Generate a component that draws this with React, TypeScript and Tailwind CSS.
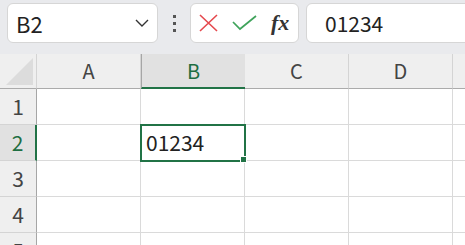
import React from "react";

const cols = ["A", "B", "C", "D", ""];
const rows = [1, 2, 3, 4, 5];

// corner triangle in the top-left header cell
const Corner = () => (
  <div className="flex h-full w-full items-end justify-end border-r border-b border-r-[#d4d4d4] border-b-[#ababab] bg-[#efefef] pr-[3px] pb-[3px]">
    <svg width="27" height="27" viewBox="0 0 27 27">
      <polygon points="27,0 27,27 0,27" fill="#dcdcdc" />
    </svg>
  </div>
);

export default function App() {
  return (
    <div
      className="h-[245px] w-[465px] overflow-hidden bg-[#e9eaed] text-[#333]"
      style={{ fontFamily: '"Noto Sans CJK JP", "Noto Sans", sans-serif' }}
    >
      {/* formula bar */}
      <div className="flex h-[54px] items-start pt-[3px] pl-[7px]">
        <div className="flex h-[40px] w-[151px] shrink-0 items-center justify-between rounded-[6px] border border-[#d6d6d6] bg-white pr-[8px] pl-[8px]">
          <span className="text-[22px] leading-none text-[#222]">B2</span>
          <svg width="14" height="8" viewBox="0 0 14 8" fill="none" stroke="#333" strokeWidth="1.4">
            <path d="M1 1l6 6 6-6" />
          </svg>
        </div>
        <div className="flex h-[40px] w-[32px] shrink-0 flex-col items-center justify-center gap-[4px]">
          <span className="h-[3px] w-[3px] bg-[#555]" />
          <span className="h-[3px] w-[3px] bg-[#555]" />
          <span className="h-[3px] w-[3px] bg-[#555]" />
        </div>
        <div className="flex h-[40px] w-[109px] shrink-0 items-center gap-[14px] rounded-[6px] border border-[#d6d6d6] bg-white pl-[8px]">
          <svg width="19" height="18" viewBox="0 0 19 18" fill="none" stroke="#e5484d" strokeWidth="1.6">
            <path d="M1 1l17 16M18 1L1 17" />
          </svg>
          <svg width="25" height="16" viewBox="0 0 25 16" fill="none" stroke="#3fa35b" strokeWidth="1.7">
            <path d="M1 7l7 7L24 1" />
          </svg>
          <span
            className="text-[22px] font-semibold italic leading-none text-[#333]"
            style={{ fontFamily: '"Liberation Serif", "DejaVu Serif", serif' }}
          >
            fx
          </span>
        </div>
        <div className="ml-[7px] flex h-[40px] w-[200px] shrink-0 items-center rounded-[6px] border border-[#d6d6d6] bg-white pl-[18px]">
          <span className="text-[21px] leading-none text-[#222]">01234</span>
        </div>
      </div>

      {/* sheet grid */}
      <div className="grid grid-cols-[37px_104px_104px_104px_104px_104px] grid-rows-[35px_36px_36px_36px_36px_36px] bg-white">
        <Corner />
        {cols.map((c) =>
          c === "B" ? (
            <div
              key={c}
              className="flex items-center justify-center border-b-2 border-l border-b-[#217346] border-l-[#a6a6a6] bg-[#e1e1e1] text-[20px] text-[#1e6e42]"
            >
              B
            </div>
          ) : (
            <div
              key={c}
              className="flex items-center justify-center border-r border-b border-r-[#d4d4d4] border-b-[#ababab] bg-[#efefef] text-[20px] text-[#444]"
            >
              {c}
            </div>
          )
        )}
        {rows.map((r) => (
          <React.Fragment key={r}>
            {r === 2 ? (
              <div className="flex items-center justify-center border-r-2 border-b border-r-[#217346] border-b-[#d4d4d4] bg-[#e1e1e1] text-[21px] text-[#1e6e42]">
                2
              </div>
            ) : (
              <div className="flex items-center justify-center border-r border-b border-r-[#a6a6a6] border-b-[#d4d4d4] bg-[#efefef] text-[21px] text-[#444]">
                {r}
              </div>
            )}
            {cols.map((c) =>
              r === 2 && c === "B" ? (
                <div key={c} className="relative border-r border-b border-[#dadada]">
                  <div className="absolute -top-px -left-px h-[38px] w-[106px] border-2 border-[#217346]" />
                  <div className="absolute -right-[3px] -bottom-[3px] h-[7px] w-[7px] border border-white bg-[#217346]" />
                  <div className="flex h-full items-center pl-[5px] text-[21px] text-[#222]">01234</div>
                </div>
              ) : (
                <div key={c} className="border-r border-b border-[#dadada]" />
              )
            )}
          </React.Fragment>
        ))}
      </div>
    </div>
  );
}
